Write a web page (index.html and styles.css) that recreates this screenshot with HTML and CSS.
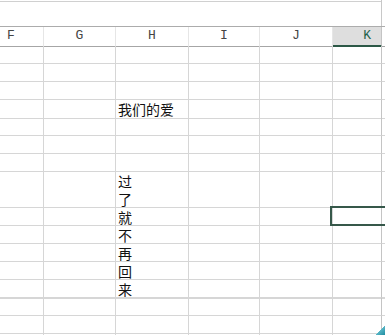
FILE: index.html
```html
<!DOCTYPE html>
<html lang="zh-CN">
  <head>
    <meta charset="UTF-8" />
    <meta name="viewport" content="width=device-width, initial-scale=1.0" />
    <title>Sheet</title>
    <link rel="stylesheet" href="styles.css">
  </head>

  <body>
    <div id="sheet">
      <div class="toolbar"></div>
      <div class="row head">
        <div class="cell">F</div>
        <div class="cell">G</div>
        <div class="cell">H</div>
        <div class="cell">I</div>
        <div class="cell">J</div>
        <div class="cell active">K</div>
        <div class="cell"></div>
      </div>
      <div id="body"></div>
      <div class="grip"></div>
    </div>
    <script>
      const body = document.getElementById("body");

      for (let r = 0; r < 17; r++) {
        const row = document.createElement("div");
        row.className = "row";
        for (let c = 0; c < 7; c++) {
          const cell = document.createElement("div");
          cell.className = "cell";
          if (c === 2 && r === 3) cell.textContent = "我们的爱";
          if (c === 2 && r === 7) {
            const vert = document.createElement("div");
            vert.className = "vertical";
            vert.textContent = "过了就不再回来";
            cell.appendChild(vert);
          }
          if (c === 5 && r === 9) cell.classList.add("selected");
          row.appendChild(cell);
        }
        body.appendChild(row);
      }
    </script>
  </body>
</html>
```

FILE: styles.css
```css
body {
  margin: 0;
  background: #fff;
  overflow: hidden;
}

#sheet {
  position: relative;
  width: 385px;
  height: 335px;
  overflow: hidden;
}

.toolbar {
  height: 26px;
  box-sizing: border-box;
  background: linear-gradient(#fff 1px, #d0d0d0 1px, #d0d0d0 2px, #fff 2px);
  border-right: 1px solid #c8c8c8;
  width: 382px;
}

.row {
  display: grid;
  grid-template-columns: 44px 72px 73px 71px 73px 49px 1fr;
  height: 18px;
}

.cell {
  box-sizing: border-box;
  border-right: 1px solid #d6d6d6;
  border-bottom: 1px solid #d6d6d6;
  font-family: "Noto Sans CJK SC", sans-serif;
  font-size: 14px;
  line-height: 18px;
  color: #111;
  padding-left: 2px;
  white-space: nowrap;
}

.cell:nth-child(6) {
  border-right-color: #c4c4c4;
}

.row .cell:last-child {
  border-right: none;
}

.vertical {
  width: 14px;
  white-space: normal;
  word-break: break-all;
  line-height: 18px;
}

.head {
  height: 19px;
  border-top: 1px solid #acacac;
}

.head .cell {
  font-family: "Liberation Mono", monospace;
  font-size: 13px;
  line-height: 18px;
  color: #444;
  text-align: center;
  padding-left: 0;
  border-right-color: #e6e6e6;
  border-bottom-color: #a6a6a6;
}

.head .cell:first-child {
  text-align: left;
  padding-left: 7px;
}

.head .active {
  background: #dedede;
  color: #22634a;
  text-align: right;
  padding-right: 10px;
  border-bottom: 2px solid #2c5846;
  border-right-color: #c4c4c4;
}

.selected {
  position: relative;
}

.selected::after {
  content: "";
  position: absolute;
  left: -3px;
  top: -2px;
  right: -8px;
  bottom: -1px;
  border: 2px solid #36584a;
}

.grip {
  position: absolute;
  right: 0;
  bottom: 0;
  width: 12px;
  height: 10px;
  background: linear-gradient(135deg, transparent 55%, #5cb8c8 55%, #1d8ca0 100%);
}
```
